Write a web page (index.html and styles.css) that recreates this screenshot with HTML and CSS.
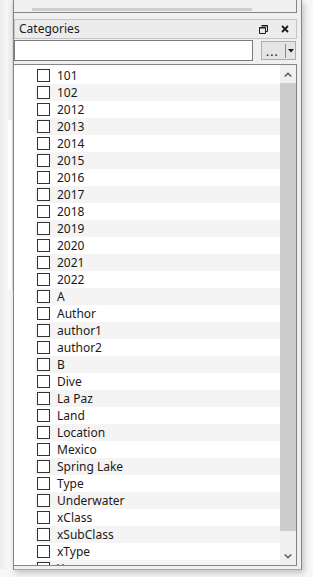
FILE: index.html
```html
<!DOCTYPE html>
<html>
<head>
<meta charset="utf-8">
<link rel="stylesheet" href="styles.css">
</head>
<body>
<div class="stage">
  <div class="side">
    <div class="side-dots"></div>
  </div>
  <div class="frame">
    <div class="topbox"><div class="hthumb"></div></div>
    <div class="panel">
      <div class="header">
        <span class="title">Categories</span>
        <span class="hicons">
          <svg class="ico" width="9" height="9" viewBox="0 0 9 9"><path d="M2.5 0.5h6v6h-2M0.5 2.5h6v6h-6z" fill="none" stroke="#1a1a1a" stroke-width="1"/><path d="M2.5 0.5h6v1h-6zM0.5 2.5h6v1h-6z" fill="#1a1a1a"/></svg>
          <svg class="ico x" width="8" height="8" viewBox="0 0 8 8"><path d="M1 1L7 7M7 1L1 7" stroke="#1a1a1a" stroke-width="1.8"/></svg>
        </span>
      </div>
      <div class="searchrow">
        <div class="input"></div>
        <div class="btn">
          <span class="dots">...</span>
          <span class="sep"></span>
          <svg width="6" height="4" viewBox="0 0 6 4"><path d="M0 0h6L3 3.5z" fill="#1a1a1a"/></svg>
        </div>
      </div>
      <div class="list">
        <div class="items">
          <div class="row"><span class="cb"></span>101</div>
          <div class="row"><span class="cb"></span>102</div>
          <div class="row"><span class="cb"></span>2012</div>
          <div class="row"><span class="cb"></span>2013</div>
          <div class="row"><span class="cb"></span>2014</div>
          <div class="row"><span class="cb"></span>2015</div>
          <div class="row"><span class="cb"></span>2016</div>
          <div class="row"><span class="cb"></span>2017</div>
          <div class="row"><span class="cb"></span>2018</div>
          <div class="row"><span class="cb"></span>2019</div>
          <div class="row"><span class="cb"></span>2020</div>
          <div class="row"><span class="cb"></span>2021</div>
          <div class="row"><span class="cb"></span>2022</div>
          <div class="row"><span class="cb"></span>A</div>
          <div class="row"><span class="cb"></span>Author</div>
          <div class="row"><span class="cb"></span>author1</div>
          <div class="row"><span class="cb"></span>author2</div>
          <div class="row"><span class="cb"></span>B</div>
          <div class="row"><span class="cb"></span>Dive</div>
          <div class="row"><span class="cb"></span>La Paz</div>
          <div class="row"><span class="cb"></span>Land</div>
          <div class="row"><span class="cb"></span>Location</div>
          <div class="row"><span class="cb"></span>Mexico</div>
          <div class="row"><span class="cb"></span>Spring Lake</div>
          <div class="row"><span class="cb"></span>Type</div>
          <div class="row"><span class="cb"></span>Underwater</div>
          <div class="row"><span class="cb"></span>xClass</div>
          <div class="row"><span class="cb"></span>xSubClass</div>
          <div class="row"><span class="cb"></span>xType</div>
          <div class="row"><span class="cb"></span>Year</div>
        </div>
        <div class="vscroll">
          <div class="arrow">
            <svg width="8" height="5" viewBox="0 0 8 5"><path d="M0.8 4.5L4 1.3L7.2 4.5" fill="none" stroke="#606060" stroke-width="1.6"/></svg>
          </div>
          <div class="thumb"></div>
          <div class="track"></div>
          <div class="arrow down">
            <svg width="8" height="5" viewBox="0 0 8 5"><path d="M0.8 0.5L4 3.7L7.2 0.5" fill="none" stroke="#606060" stroke-width="1.6"/></svg>
          </div>
        </div>
      </div>
    </div>
  </div>
</div>
</body>
</html>
```

FILE: styles.css
```css
* { box-sizing: border-box; }
html, body { margin: 0; padding: 0; }
body {
  width: 313px;
  height: 577px;
  overflow: hidden;
  background: #ffffff;
  font-family: "Noto Sans", "Liberation Sans", sans-serif;
  font-size: 12px;
  color: #1a1a1a;
}
.stage {
  display: flex;
  align-items: flex-start;
  width: 313px;
  height: 577px;
  background: #f7f7f7;
}
.side {
  width: 13px;
  height: 569px;
  padding-left: 8px;
  background: linear-gradient(to right, #ececec 0px, #f7f7f7 8px);
}
.side-dots {
  width: 5px;
  height: 290px;
  background: linear-gradient(to bottom, #eef1f4 0px, #eef1f4 120px, #ffffff 120px, #ffffff 290px);
  border-right: 1px solid #e3e3e3;
}
.frame {
  width: 289px;
  height: 570px;
  border-left: 1px solid #858585;
  border-right: 1px solid #858585;
  border-bottom: 1px solid #a8a8a8;
  background: #f0f0f0;
  box-shadow: 2px 3px 6px rgba(0,0,0,0.22);
  padding-right: 4px;
  display: flex;
  flex-direction: column;
  overflow: hidden;
}
.topbox {
  height: 13px;
  flex: none;
  border-right: 1px solid #858585;
  border-bottom: 1px solid #858585;
  background: #f0f0f0;
  padding: 8px 0 0 18px;
}
.hthumb {
  width: 220px;
  height: 3px;
  background: #cdcdcd;
}
.panel {
  flex: 1;
  min-height: 0;
  display: flex;
  flex-direction: column;
  padding-top: 6px;
  padding-bottom: 3px;
}
.header {
  height: 20px;
  flex: none;
  border: 1px solid #c4c4c4;
  background: #ececec;
  display: flex;
  align-items: center;
  justify-content: space-between;
  padding: 0 7px 0 4px;
}
.title { font-size: 12px; line-height: 16px; }
.hicons { display: flex; align-items: center; gap: 13px; }
.ico { display: block; }
.searchrow {
  display: flex;
  flex: none;
  align-items: center;
  margin-top: 1px;
  height: 21px;
  gap: 8px;
}
.input {
  width: 239px;
  height: 21px;
  background: #ffffff;
  border: 1px solid #7a7a7a;
}
.btn {
  width: 35px;
  height: 19px;
  border: 1px solid #adadad;
  background: #e5e5e5;
  display: flex;
  align-items: center;
  padding-left: 4px;
}
.dots {
  width: 18px;
  color: #400000;
  font-size: 12px;
  line-height: 10px;
  letter-spacing: 1px;
  padding-top: 2px;
}
.sep {
  width: 1px;
  height: 14px;
  background: #8a8a8a;
  margin: 0 2px 0 1px;
}
.btn svg { display: block; }
.list {
  margin-top: 3px;
  margin-left: -1px;
  flex: 1;
  min-height: 0;
  border-top: 1px solid #858585;
  border-right: 1px solid #858585;
  border-bottom: 1px solid #858585;
  background: #ffffff;
  display: flex;
  overflow: hidden;
}
.items {
  flex: 1;
  padding: 2px 0 0 22px;
  overflow: hidden;
}
.row {
  height: 17px;
  display: flex;
  align-items: center;
  padding-left: 2px;
  line-height: 17px;
  white-space: nowrap;
}
.row:nth-child(even) { background: #f4f4f4; }
.cb {
  width: 13px;
  height: 13px;
  border: 1px solid #333333;
  background: #ffffff;
  margin-right: 7px;
  flex: none;
}
.vscroll {
  width: 16px;
  background: #f0f0f0;
  display: flex;
  flex-direction: column;
}
.arrow {
  height: 18px;
  display: flex;
  align-items: center;
  justify-content: center;
  flex: none;
}
.thumb {
  height: 448px;
  background: #cdcdcd;
  flex: none;
}
.track { flex: 1; }
.arrow.down { height: 17px; }
```
